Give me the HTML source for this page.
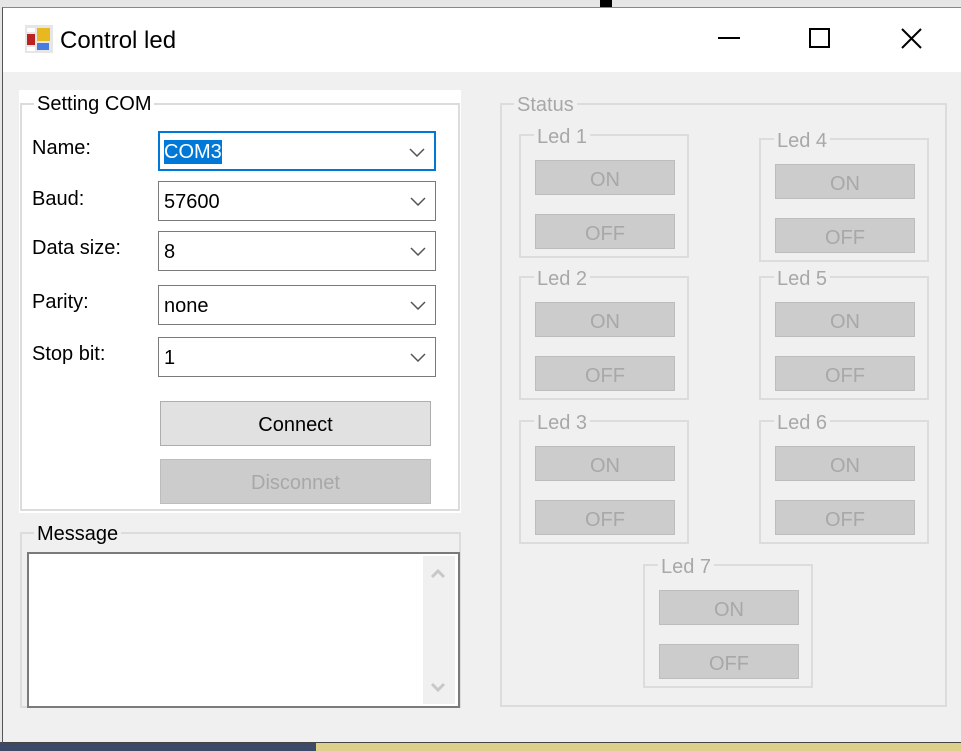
<!DOCTYPE html>
<html><head><meta charset="utf-8"><style>
*{margin:0;padding:0;box-sizing:border-box}
body{width:961px;height:751px;overflow:hidden;position:relative;background:#e6e6e6;font-family:"Liberation Sans",Arial,sans-serif;font-size:20px;color:#000}
.a{position:absolute}
.win{left:2px;top:7px;width:959px;height:736px;background:#f0f0f0;border-left:1px solid #555;border-top:1px solid #888;border-bottom:1px solid #444}
.title{left:3px;top:8px;width:958px;height:64px;background:#fff}
.g{position:absolute;border:2px solid #dcdcdc}
.lg{position:absolute;background:#f0f0f0;padding:0 3px;line-height:20px;color:#a8a8a8}
.cb{position:absolute;left:158px;width:278px;height:40px;border:1px solid #7a7a7a;background:#fff;padding-left:5px;line-height:40px}
.cb svg{position:absolute;right:9px;top:15px}
.lbl{position:absolute;left:32px}
.btn{position:absolute;width:140px;height:35px;background:#cccccc;border:1px solid #bdbdbd;color:#a8a8a8;text-align:center;line-height:38px;font-size:20px}
</style></head><body>
<div class="a" style="left:0;top:742px;width:961px;height:9px;background:#3c4a68"></div>
<div class="a" style="left:316px;top:742px;width:645px;height:9px;background:#ddd08a"></div>
<div class="a" style="left:600px;top:0;width:12px;height:7px;background:#000"></div>
<div class="a win"></div>
<div class="a title"></div>
<svg class="a" style="left:25px;top:25px" width="28" height="28" viewBox="0 0 28 28">
<rect x="0" y="0" width="28" height="28" fill="#e6e6e6"/>
<rect x="2" y="9" width="8" height="11" fill="#b22"/>
<rect x="12" y="3" width="13" height="13" fill="#e8b820"/>
<rect x="12" y="18" width="12" height="7" fill="#4a7ce0"/>
<rect x="2" y="22" width="8" height="4" fill="#fff"/>
<rect x="2" y="3" width="8" height="4" fill="#fff"/>
</svg>
<div class="a" style="left:60px;top:28px;font-size:24px;line-height:26px">Control led</div>
<div class="a" style="left:718px;top:37px;width:22px;height:2px;background:#000"></div>
<div class="a" style="left:809px;top:28px;width:21px;height:20px;border:2px solid #000"></div>
<svg class="a" style="left:901px;top:28px" width="21" height="21"><path d="M1 1L20 20M20 1L1 20" stroke="#000" stroke-width="2"/></svg>

<div class="a" style="left:19px;top:90px;width:442px;height:423px;background:#fff"></div>
<div class="g" style="left:20px;top:103px;width:440px;height:408px"></div>
<div class="lg" style="left:34px;top:94px;background:#fff;color:#000">Setting COM</div>
<div class="lbl" style="top:137px">Name:</div>
<div class="lbl" style="top:188px">Baud:</div>
<div class="lbl" style="top:237px">Data size:</div>
<div class="lbl" style="top:291px">Parity:</div>
<div class="lbl" style="top:343px">Stop bit:</div>
<div class="cb" style="top:131px;border:2px solid #0078d7;padding-left:4px;line-height:38px"><span style="background:#0078d7;color:#fff;padding:1px 0">COM3</span><svg width="16" height="9"><path d="M1 1L8 8L15 1" fill="none" stroke="#555" stroke-width="1.5"/></svg></div>
<div class="cb" style="top:181px">57600<svg width="16" height="9"><path d="M1 1L8 8L15 1" fill="none" stroke="#555" stroke-width="1.5"/></svg></div>
<div class="cb" style="top:231px">8<svg width="16" height="9"><path d="M1 1L8 8L15 1" fill="none" stroke="#555" stroke-width="1.5"/></svg></div>
<div class="cb" style="top:285px">none<svg width="16" height="9"><path d="M1 1L8 8L15 1" fill="none" stroke="#555" stroke-width="1.5"/></svg></div>
<div class="cb" style="top:337px">1<svg width="16" height="9"><path d="M1 1L8 8L15 1" fill="none" stroke="#555" stroke-width="1.5"/></svg></div>
<div class="btn" style="left:160px;top:401px;width:271px;height:45px;line-height:46px;background:#e1e1e1;border-color:#adadad;color:#000">Connect</div>
<div class="btn" style="left:160px;top:459px;width:271px;height:45px;line-height:46px">Disconnet</div>

<div class="g" style="left:20px;top:532px;width:441px;height:176px"></div>
<div class="lg" style="left:34px;top:524px;color:#000">Message</div>
<div class="a" style="left:27px;top:552px;width:433px;height:156px;background:#fff;border:2px solid #7a7a7a"></div>
<div class="a" style="left:423px;top:556px;width:32px;height:148px;background:#f0f0f0"></div>
<svg class="a" style="left:430px;top:568px" width="16" height="140"><path d="M2 9L8 3L14 9" fill="none" stroke="#c8c8c8" stroke-width="3"/><path d="M2 116L8 122L14 116" fill="none" stroke="#c8c8c8" stroke-width="3"/></svg>

<div class="g" style="left:500px;top:103px;width:447px;height:604px"></div>
<div class="lg" style="left:514px;top:95px">Status</div>

<div class="g" style="left:519px;top:134px;width:170px;height:124px"></div><div class="lg" style="left:534px;top:127px">Led 1</div>
<div class="btn" style="left:535px;top:160px">ON</div><div class="btn" style="left:535px;top:214px">OFF</div>
<div class="g" style="left:759px;top:138px;width:170px;height:124px"></div><div class="lg" style="left:774px;top:131px">Led 4</div>
<div class="btn" style="left:775px;top:164px">ON</div><div class="btn" style="left:775px;top:218px">OFF</div>

<div class="g" style="left:519px;top:276px;width:170px;height:124px"></div><div class="lg" style="left:534px;top:269px">Led 2</div>
<div class="btn" style="left:535px;top:302px">ON</div><div class="btn" style="left:535px;top:356px">OFF</div>
<div class="g" style="left:759px;top:276px;width:170px;height:124px"></div><div class="lg" style="left:774px;top:269px">Led 5</div>
<div class="btn" style="left:775px;top:302px">ON</div><div class="btn" style="left:775px;top:356px">OFF</div>

<div class="g" style="left:519px;top:420px;width:170px;height:124px"></div><div class="lg" style="left:534px;top:413px">Led 3</div>
<div class="btn" style="left:535px;top:446px">ON</div><div class="btn" style="left:535px;top:500px">OFF</div>
<div class="g" style="left:759px;top:420px;width:170px;height:124px"></div><div class="lg" style="left:774px;top:413px">Led 6</div>
<div class="btn" style="left:775px;top:446px">ON</div><div class="btn" style="left:775px;top:500px">OFF</div>

<div class="g" style="left:643px;top:564px;width:170px;height:124px"></div><div class="lg" style="left:658px;top:557px">Led 7</div>
<div class="btn" style="left:659px;top:590px">ON</div><div class="btn" style="left:659px;top:644px">OFF</div>
</body></html>
